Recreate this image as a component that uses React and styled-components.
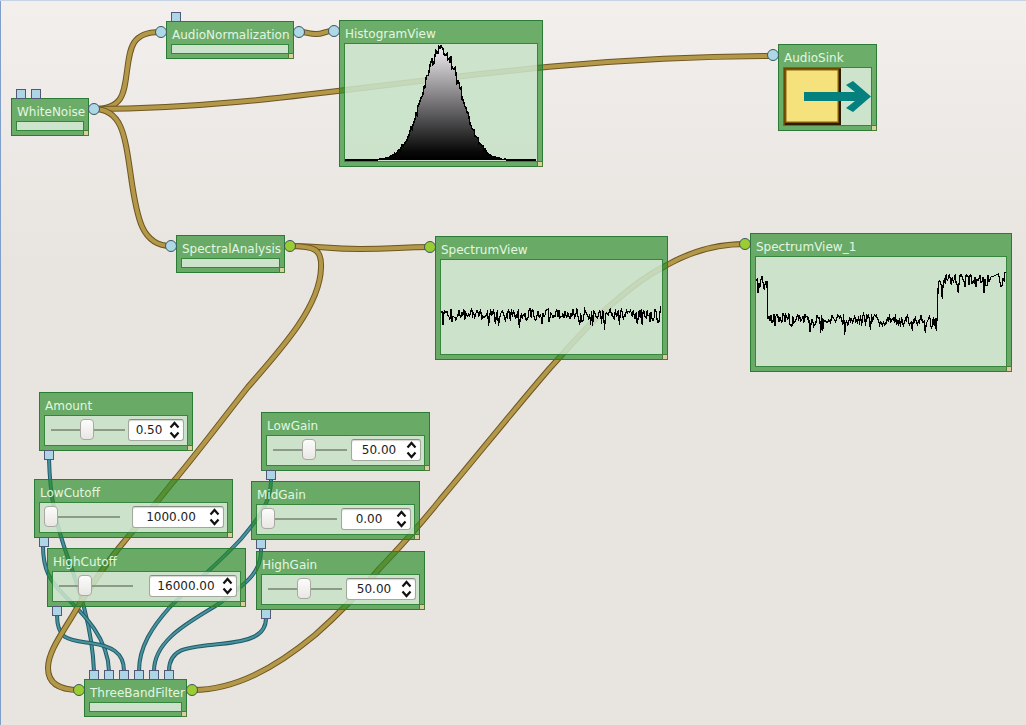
import React from "react";
import styled, { createGlobalStyle, css } from "styled-components";

const GlobalStyle = createGlobalStyle`
  *, *::before, *::after { box-sizing: border-box; }
  body {
    margin: 0;
    font-family: "DejaVu Sans", sans-serif;
    font-size: 12px;
    background: #e8e4df;
  }
`;

const Canvas = styled.main`
  position: relative;
  min-height: 100vh;
  overflow: hidden;
  border-top: 1px solid #c6d3e4;
  background: linear-gradient(#f2efec 0, #ede9e6 130px, #e8e4df 260px);

  &::before {
    content: "";
    position: absolute;
    top: 0;
    bottom: 0;
    left: 0;
    width: 1px;
    background: #7f9fca;
  }
`;

const WireLayer = styled.svg`
  position: absolute;
  top: -1px;
  left: 0;
  width: 100%;
  height: 100%;
  overflow: visible;
  fill: none;
`;

const NodeBox = styled.section`
  position: absolute;
  left: ${(p) => p.$x}px;
  top: ${(p) => p.$y - 1}px;
  width: ${(p) => p.$w}px;
  height: ${(p) => p.$h}px;
  display: flex;
  flex-direction: column;
  padding: 0 4px 4px;
  border: 1px solid #2b7a35;
  background: rgba(40, 140, 40, 0.66);
`;

const Title = styled.h2`
  margin: 0;
  padding-top: 4px;
  font-size: 12px;
  line-height: 18px;
  font-weight: 400;
  text-indent: 1px;
  white-space: nowrap;
  color: #e3f6e1;
`;

const Panel = styled.div`
  flex: 1;
  min-height: 0;
  display: flex;
  align-items: center;
  justify-content: space-between;
  border: 1px solid #35853c;
  background: rgba(255, 255, 255, 0.66);
  ${(p) =>
    p.$controls &&
    css`
      padding: 0 3px 2px 4px;
    `}
`;

const Grip = styled.span`
  position: absolute;
  right: -1px;
  bottom: -1px;
  width: 6px;
  height: 6px;
  border: 1px solid #4d7a35;
  background: #d8cfa4;
`;

const Port = styled.span`
  position: absolute;
  top: 4px;
  width: 12px;
  height: 12px;
  border: 1px solid #3f5560;
  border-radius: 50%;
  background: ${(p) => (p.$kind === "spectrum" ? "#9acd32" : "#add8e6")};
  ${(p) => (p.$side === "in" ? "left: -12px;" : "right: -12px;")}
`;

const PinRow = styled.div`
  position: absolute;
  left: 4px;
  display: flex;
  gap: 5px;
  ${(p) => (p.$side === "top" ? "top: -10px;" : "bottom: -10px;")}
`;

const Pin = styled.span`
  width: 10px;
  height: 10px;
  border: 1px solid #505a78;
  background: #add5e6;
`;

const Slider = styled.input`
  appearance: none;
  width: 76px;
  height: 20px;
  margin: 0;
  background: linear-gradient(#8d9a88, #8d9a88) right center / calc(100% - 2px) 2px no-repeat;

  &::-webkit-slider-thumb {
    appearance: none;
    width: 14px;
    height: 21px;
    border: 1px solid #aaa8a2;
    border-radius: 4px;
    background: linear-gradient(#fcfcfb, #e9e7e4);
  }
`;

const SpinBox = styled.div`
  display: flex;
  align-items: center;
  width: ${(p) => p.$w}px;
  height: 22px;
  padding-right: 3px;
  border: 1px solid #a2a89c;
  border-top-color: #858c80;
  border-radius: 3px;
  background: #fff;
  box-shadow: inset 0 1px 1px #d5d5d2;
`;

const SpinInput = styled.input`
  flex: 1;
  min-width: 0;
  padding: 0;
  border: 0;
  background: none;
  font: inherit;
  line-height: 18px;
  text-align: center;
  color: #1c1c1c;
`;

const StepButtons = styled.div`
  display: flex;
  flex-direction: column;
  gap: 2px;
`;

const StepButton = styled.button`
  display: block;
  width: 11px;
  height: 8px;
  padding: 0;
  border: 0;
  background: none;
  color: #111;

  svg {
    display: block;
  }
`;

const Drawing = styled.svg`
  display: block;
  width: 100%;
  height: 100%;
`;

const audioWires = [
  "M94 109 C122 109 124 95 127 71 S132 32 160 32",
  "M94 109 C310 109 480 57 773 56",
  "M94 109 C122 109 125 135 131 177 S142 246 171 246",
  "M299 32 C309 32 308 34 316 34 S324 31 333 31",
  "M290 246 C325 246 325 249 360 249 S400 247 430 247",
  "M290 246 C316 246 322 250 321 268 C320 305 285 345 248 387 C222 420 198 452 173 482 C150 511 140 522 123 543 C107 562 93 583 80 603 C65 630 48 650 48 668 C48 684 60 690 79 690",
  "M193 690 C235 690 275 668 315 635 C340 613 360 592 380 568 C402 545 420 525 440 500 C477 456 512 412 550 368 C572 344 590 322 613 303 C632 287 647 275 667 265 C690 252 715 244 745 244",
];

const controlWires = [
  "M49 459 C50 500 57 527 68 558 S92 625 94 671",
  "M43 546 C43 570 50 581 65 596 S108 636 109 671",
  "M57 615 C57 640 69 640 90 643 S124 652 124 671",
  "M271 480 C271 502 259 518 241 539 C218 564 193 584 170 607 C152 627 139 647 139 671",
  "M261 548 C262 570 250 581 220 603 C194 620 154 638 154 671",
  "M266 618 C266 636 250 641 220 644 S169 647 169 671",
];

function Wire({ d, outline, color, width }) {
  return (
    <g>
      <path d={d} stroke={outline} strokeWidth={width} />
      <path d={d} stroke={color} strokeWidth={width - 2} />
    </g>
  );
}

function randomFrom(seed) {
  let s = seed;
  return () => {
    s = (s * 1103515245 + 12345) % 2147483648;
    return s / 2147483648;
  };
}

function toPoints(values) {
  return values.map((y, x) => `${x},${y.toFixed(1)}`).join(" ");
}

function spectrumPoints(width, seed, level, dips) {
  const rnd = randomFrom(seed);
  const values = [];
  for (let x = 0; x < width; x += 1) {
    const r = rnd();
    values.push(level(x) + (r < 0.2 ? 3 + rnd() * 6 : rnd() * 10 - 5));
  }
  dips.forEach(([x, y]) => {
    values[x] = y;
  });
  return toPoints(values);
}

function histogramPoints() {
  const rnd = randomFrom(17);
  const values = [];
  for (let x = 0; x < 192; x += 1) {
    const g = Math.exp(-((x - 97) ** 2) / (2 * 19.5 ** 2));
    values.push(g < 0.004 ? 116 : 116 - 110 * g + (rnd() - 0.5) * 11 * Math.sqrt(g));
  }
  return toPoints(values);
}

function Histogram() {
  const points = histogramPoints();
  return (
    <Drawing viewBox="0 0 192 117" preserveAspectRatio="none" role="img" aria-label="Histogram">
      <defs>
        <linearGradient id="histogram-fill" x1="0" y1="0" x2="0" y2="1">
          <stop offset="0" stopColor="#f4f0f5" />
          <stop offset="0.93" stopColor="#080808" />
          <stop offset="1" stopColor="#000" />
        </linearGradient>
      </defs>
      <polygon points={`0,116 ${points} 191,116`} fill="url(#histogram-fill)" />
      <polyline
        points={points}
        fill="none"
        stroke="#000"
        strokeWidth="1.5"
        shapeRendering="crispEdges"
      />
    </Drawing>
  );
}

function Spectrum({ width, height, points }) {
  return (
    <Drawing
      viewBox={`0 0 ${width} ${height}`}
      preserveAspectRatio="none"
      role="img"
      aria-label="Spectrum"
    >
      <polyline
        points={points}
        fill="none"
        stroke="#000"
        strokeWidth="1.2"
        shapeRendering="crispEdges"
      />
    </Drawing>
  );
}

const flatSpectrum = spectrumPoints(223, 5, () => 54, [
  [2, 66], [48, 67], [55, 65], [58, 67], [79, 69], [102, 65], [140, 66], [151, 66],
  [153, 67], [162, 65], [165, 71], [180, 66], [198, 65], [203, 66], [216, 50], [217, 52],
  [218, 60], [219, 63], [220, 62], [221, 52], [222, 47],
]);

const bandLevel = (x) => (x < 12 ? 24 : x < 183 ? 62 : 22);
const filteredSpectrum = spectrumPoints(251, 11, bandLevel, [
  [2, 36], [54, 76], [65, 77], [67, 75], [89, 79], [115, 74], [157, 75], [170, 77],
  [176, 73], [181, 75], [187, 42], [203, 36], [229, 36], [236, 20], [237, 20], [238, 20],
  [239, 19], [240, 19], [241, 18], [242, 18], [243, 17], [244, 20], [245, 26], [246, 30],
  [247, 29], [248, 22], [249, 24], [250, 15],
]);

function SinkIcon() {
  return (
    <Drawing viewBox="0 0 87 57" role="img" aria-label="Audio output">
      <rect x="0" y="0" width="57" height="57" fill="#6b4a00" />
      <path d="M1 57V55H55V1H57V57Z" fill="#2b1c00" />
      <rect x="2" y="2" width="52" height="52" fill="#f5e27d" stroke="#8a6410" />
      <path d="M20 24H71L62 17L69 13L87 28.500L69 44L62 40L71 33H20Z" fill="#04807f" />
    </Drawing>
  );
}

function Chevron({ down }) {
  return (
    <svg width="11" height="8" viewBox="0 0 11 8" aria-hidden="true">
      <path
        d={down ? "M1.5 1.5L5.5 6L9.5 1.5" : "M1.5 6.5L5.5 2L9.5 6.5"}
        fill="none"
        stroke="currentColor"
        strokeWidth="2.2"
      />
    </svg>
  );
}

function Pins({ side, count }) {
  return (
    <PinRow $side={side}>
      {Array.from({ length: count }, (_, i) => (
        <Pin key={i} />
      ))}
    </PinRow>
  );
}

function Node({ name, x, y, w, h = 38, input, output, topPins, bottomPins, controls, children }) {
  return (
    <NodeBox $x={x} $y={y} $w={w} $h={h}>
      <Title>{controls ? <label htmlFor={`${name}-value`}>{name}</label> : name}</Title>
      <Panel $controls={controls}>{children}</Panel>
      <Grip />
      {input && <Port $side="in" $kind={input} />}
      {output && <Port $side="out" $kind={output} />}
      {topPins && <Pins side="top" count={topPins} />}
      {bottomPins && <Pins side="bottom" count={bottomPins} />}
    </NodeBox>
  );
}

function ValueNode({ name, x, y, w, value, level, spinWidth }) {
  return (
    <Node name={name} x={x} y={y} w={w} h={59} bottomPins={1} controls>
      <Slider type="range" min="0" max="100" defaultValue={level} aria-label={`${name} slider`} />
      <SpinBox $w={spinWidth}>
        <SpinInput id={`${name}-value`} type="text" inputMode="decimal" defaultValue={value} />
        <StepButtons>
          <StepButton type="button" aria-label={`Increase ${name}`}>
            <Chevron />
          </StepButton>
          <StepButton type="button" aria-label={`Decrease ${name}`}>
            <Chevron down />
          </StepButton>
        </StepButtons>
      </SpinBox>
    </Node>
  );
}

const valueNodes = [
  { name: "Amount", x: 39, y: 392, w: 154, value: "0.50", level: 50, spinWidth: 56 },
  { name: "LowCutoff", x: 34, y: 479, w: 199, value: "1000.00", level: 0, spinWidth: 92 },
  { name: "HighCutoff", x: 47, y: 548, w: 199, value: "16000.00", level: 34, spinWidth: 88 },
  { name: "LowGain", x: 261, y: 412, w: 169, value: "50.00", level: 50, spinWidth: 70 },
  { name: "MidGain", x: 251, y: 481, w: 169, value: "0.00", level: 0, spinWidth: 70 },
  { name: "HighGain", x: 256, y: 551, w: 169, value: "50.00", level: 50, spinWidth: 70 },
];

export default function App() {
  return (
    <>
      <GlobalStyle />
      <Canvas>
        <WireLayer aria-hidden="true">
          {controlWires.map((d) => (
            <Wire key={d} d={d} outline="#1d5c6c" color="#4b939c" width={4} />
          ))}
          {audioWires.map((d) => (
            <Wire key={d} d={d} outline="#6d5620" color="#b4984a" width={6} />
          ))}
        </WireLayer>

        <Node name="WhiteNoise" x={11} y={98} w={78} output="audio" topPins={2} />
        <Node name="AudioNormalization" x={166} y={21} w={128} input="audio" output="audio" topPins={1} />
        <Node name="HistogramView" x={339} y={20} w={204} h={147} input="audio">
          <Histogram />
        </Node>
        <Node name="AudioSink" x={778} y={44} w={99} h={87} input="audio">
          <SinkIcon />
        </Node>
        <Node name="SpectralAnalysis" x={176} y={235} w={109} input="audio" output="spectrum" />
        <Node name="SpectrumView" x={435} y={236} w={233} h={124} input="spectrum">
          <Spectrum width={223} height={95} points={flatSpectrum} />
        </Node>
        <Node name="SpectrumView_1" x={750} y={233} w={262} h={139} input="spectrum">
          <Spectrum width={251} height={110} points={filteredSpectrum} />
        </Node>
        {valueNodes.map((node) => (
          <ValueNode key={node.name} {...node} />
        ))}
        <Node
          name="ThreeBandFilter"
          x={84}
          y={679}
          w={103}
          input="spectrum"
          output="spectrum"
          topPins={6}
        />
      </Canvas>
    </>
  );
}
